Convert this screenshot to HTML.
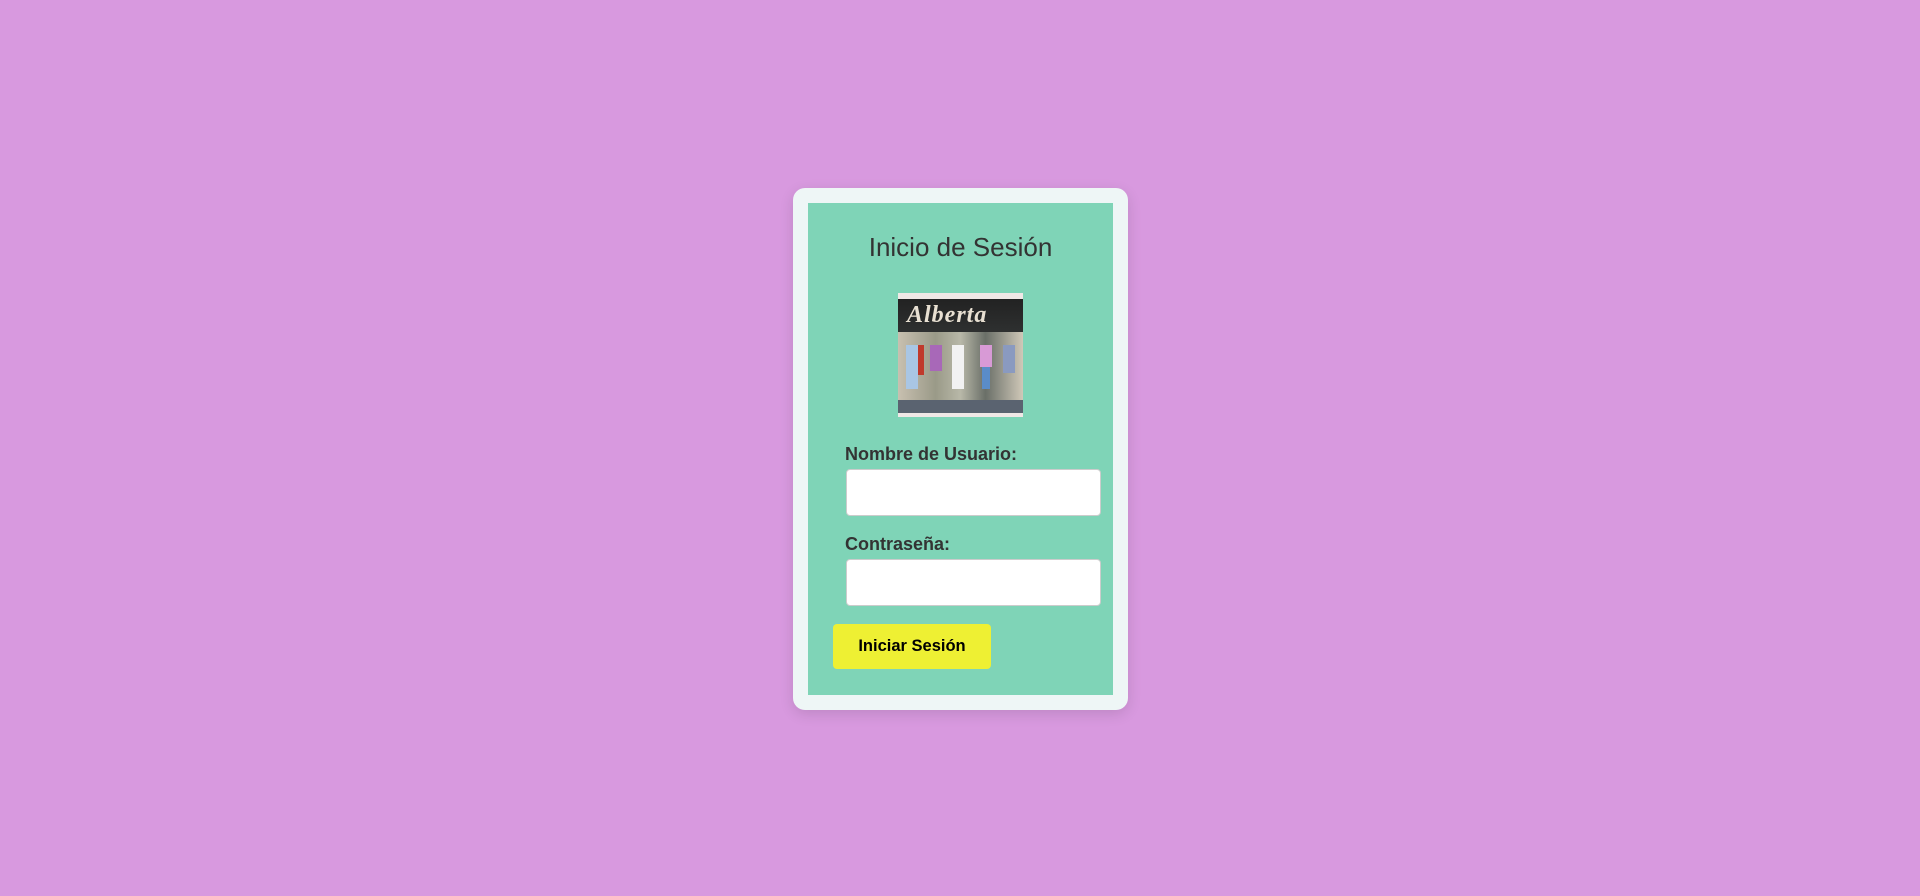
<!DOCTYPE html>
<html><head><meta charset="utf-8"><style>
html,body{margin:0;padding:0;}
body{width:1920px;height:896px;background:#d899df;position:relative;font-family:"Liberation Sans",Arial,sans-serif;overflow:hidden;}
.card{position:absolute;left:793px;top:188px;width:335px;height:522px;background:#eef6f6;border-radius:12px;box-shadow:0 4px 14px rgba(0,0,0,0.12);}
.inner{position:absolute;left:15px;top:15px;width:305px;height:492px;background:#7fd4b7;}
h1{position:absolute;left:0;width:100%;top:31px;margin:0;font-size:26px;line-height:26px;font-weight:normal;color:#333;text-align:center;}
.img{position:absolute;left:90px;top:90px;width:125px;height:124px;background:#f0e8e6;overflow:hidden;}
.band{position:absolute;left:0;top:6px;width:125px;height:33px;background:linear-gradient(#222,#2e3030);}
.band span{position:absolute;left:9px;top:3px;font-family:"Liberation Serif",serif;font-style:italic;font-weight:bold;font-size:24px;color:#e8e0d2;letter-spacing:1px;}
.shop{position:absolute;left:0;top:39px;width:125px;height:68px;background:linear-gradient(90deg,#c8c0b0,#9a9a88 30%,#b8b8a8 50%,#6a6f68 70%,#cfc8b8);}
.floor{position:absolute;left:0;top:107px;width:125px;height:13px;background:#5a6370;}
.m{position:absolute;top:52px;width:12px;height:44px;}
label{position:absolute;left:37px;font-weight:bold;font-size:18px;line-height:18px;color:#333;}
.inp{position:absolute;left:38px;width:253px;height:45px;background:#fff;border:1px solid #ccc;border-radius:4px;}
.btn{position:absolute;left:25px;top:421px;width:158px;height:45px;background:#eef033;border-radius:4px;font-weight:bold;font-size:16.5px;color:#000;line-height:45px;text-align:center;}
</style></head><body>
<div class="card"><div class="inner">
<h1>Inicio de Sesión</h1>
<div class="img">
<div class="band"><span>Alberta</span></div>
<div class="shop"></div>
<div class="m" style="left:8px;background:#a9c6e4"></div>
<div class="m" style="left:20px;background:#c0392b;width:6px;height:30px"></div>
<div class="m" style="left:32px;background:#a868b8;height:26px"></div>
<div class="m" style="left:54px;background:#f2f2f2"></div>
<div class="m" style="left:82px;background:#d89ad6;height:22px"></div>
<div class="m" style="left:84px;top:74px;background:#5a8cc8;height:22px;width:8px"></div>
<div class="m" style="left:105px;background:#8a9ac0;height:28px"></div>
<div class="floor"></div>
</div>
<label style="top:242px">Nombre de Usuario:</label>
<div class="inp" style="top:266px"></div>
<label style="top:332px">Contraseña:</label>
<div class="inp" style="top:356px"></div>
<div class="btn">Iniciar Sesión</div>
</div></div>
</body></html>
